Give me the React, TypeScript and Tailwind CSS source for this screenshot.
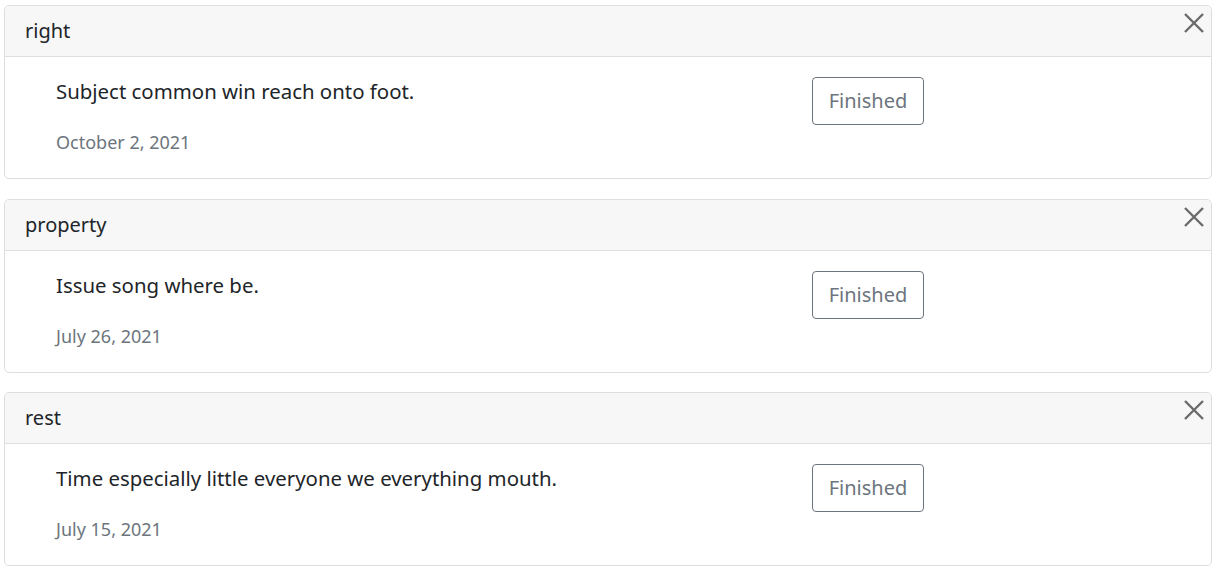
const tasks = [
  { title: "right", text: "Subject common win reach onto foot.", date: "October 2, 2021" },
  { title: "property", text: "Issue song where be.", date: "July 26, 2021" },
  { title: "rest", text: "Time especially little everyone we everything mouth.", date: "July 15, 2021" },
];

function CloseIcon() {
  return (
    <svg width="22" height="22" viewBox="0 0 22 22" fill="none">
      <path d="M2 2L20 20M20 2L2 20" stroke="#6b6b6b" strokeWidth="2.4" />
    </svg>
  );
}

function TaskCard({ title, text, date }: { title: string; text: string; date: string }) {
  return (
    <div className="relative mx-[4px] w-[1208px] rounded-[5px] border border-[#dedede] bg-white">
      <div className="flex h-[51px] items-center rounded-t-[5px] border-b border-[#dedede] bg-[#f7f7f7] px-[20px] text-[20px] text-[#212529]">
        {title}
      </div>
      <button className="absolute right-[6px] top-[6px]">
        <CloseIcon />
      </button>
      <div className="flex pt-[20px] pb-[21px]">
        <div className="w-[807px] pl-[51px]">
          <p className="text-[20.4px] leading-[29px] text-[#212529]">{text}</p>
          <p className="mt-[21px] text-[18px] leading-[30px] text-[#6c757d]">{date}</p>
        </div>
        <div>
          <button className="h-[48px] w-[112px] rounded-[4px] border border-[#6c757d] text-[20px] text-[#6c757d]">
            Finished
          </button>
        </div>
      </div>
    </div>
  );
}

export default function App() {
  return (
    <div className="flex flex-col gap-[19.5px] pt-[5px] bg-white" style={{ fontFamily: '"Noto Sans", sans-serif' }}>
      {tasks.map((t) => (
        <TaskCard key={t.title} {...t} />
      ))}
    </div>
  );
}
